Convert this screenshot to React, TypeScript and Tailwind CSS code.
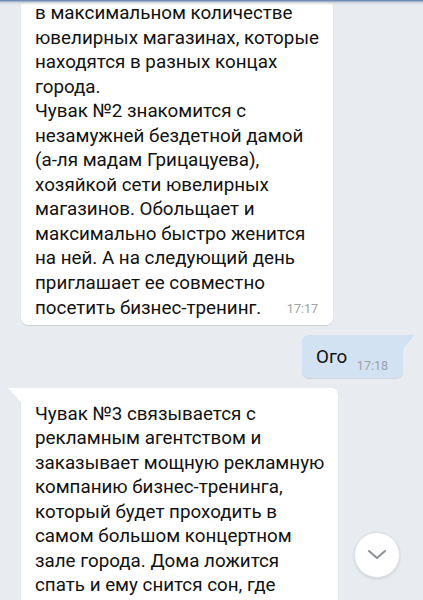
import React from 'react';

const first = [
  'в максимальном количестве',
  'ювелирных магазинах, которые',
  'находятся в разных концах',
  'города.',
  'Чувак №2 знакомится с',
  'незамужней бездетной дамой',
  '(а-ля мадам Грицацуева),',
  'хозяйкой сети ювелирных',
  'магазинов. Обольщает и',
  'максимально быстро женится',
  'на ней. А на следующий день',
  'приглашает ее совместно',
];

const third = [
  'Чувак №3 связывается с',
  'рекламным агентством и',
  'заказывает мощную рекламную',
  'компанию бизнес-тренинга,',
  'который будет проходить в',
  'самом большом концертном',
  'зале города. Дома ложится',
  'спать и ему снится сон, где',
];

function Time({ value }: { value: string }) {
  return <span className="text-[12.5px] text-[#9da1a6] leading-none">{value}</span>;
}

export default function App() {
  return (
    <div
      className="relative w-[423px] h-[600px] overflow-hidden bg-[#e8ecf0] text-[#111]"
      style={{ fontFamily: 'Roboto, "Noto Sans", sans-serif' }}
    >
      {/* header shadow */}
      <div className="absolute top-0 left-0 right-0 h-[5px] z-10 bg-gradient-to-b from-[#5b7ca6] via-[#cdd5de] to-transparent" />

      <div className="flex flex-col mt-[-8px] text-[18.8px] leading-[24.5px] whitespace-nowrap">
        {/* incoming 1 */}
        <div className="ml-[21px] w-[312px] bg-white rounded-b-[7px] shadow-[0_1px_1px_rgba(0,0,0,0.12)] pl-[14px] pr-[15px] pt-[9px] pb-[4px]">
          {first.map((l) => (
            <div key={l}>{l}</div>
          ))}
          <div className="flex items-end justify-between">
            <span>посетить бизнес-тренинг.</span>
            <span className="mb-[1px]"><Time value="17:17" /></span>
          </div>
        </div>

        {/* outgoing */}
        <div className="relative self-end mr-[20px] mt-[10px] w-[101px] h-[43px] bg-[#d3e2f3] rounded-l-[7px] rounded-br-[7px] shadow-[0_1px_1px_rgba(0,0,0,0.1)] flex items-center pl-[14px] pr-[15px] justify-between">
          <svg className="absolute top-0 right-[-12px]" width="12" height="14" viewBox="0 0 12 14">
            <polygon points="0,0 12,0 0,14" fill="#d3e2f3" />
          </svg>
          <span className="mt-[2px]">Ого</span>
          <span className="mt-[16px]"><Time value="17:18" /></span>
        </div>

        {/* incoming 2 */}
        <div className="relative ml-[21px] mt-[10px] w-[317px] bg-white rounded-r-[7px] shadow-[0_1px_1px_rgba(0,0,0,0.12)] pl-[14px] pr-[15px] pt-[14px] pb-[8px]">
          <svg className="absolute top-0 left-[-13px]" width="13" height="14" viewBox="0 0 13 14">
            <polygon points="0,0 13,0 13,14" fill="#ffffff" />
          </svg>
          {third.map((l) => (
            <div key={l}>{l}</div>
          ))}
        </div>
      </div>

      {/* scroll down button */}
      <button className="absolute left-[354px] top-[532px] w-[46px] h-[46px] rounded-full bg-white border border-[#dde0e4] shadow-[0_1px_3px_rgba(0,0,0,0.12)] flex items-center justify-center">
        <svg width="20" height="12" viewBox="0 0 20 12" fill="none">
          <path d="M2 2l8 7 8-7" stroke="#8a9199" strokeWidth="2" strokeLinecap="round" strokeLinejoin="round" />
        </svg>
      </button>
    </div>
  );
}
